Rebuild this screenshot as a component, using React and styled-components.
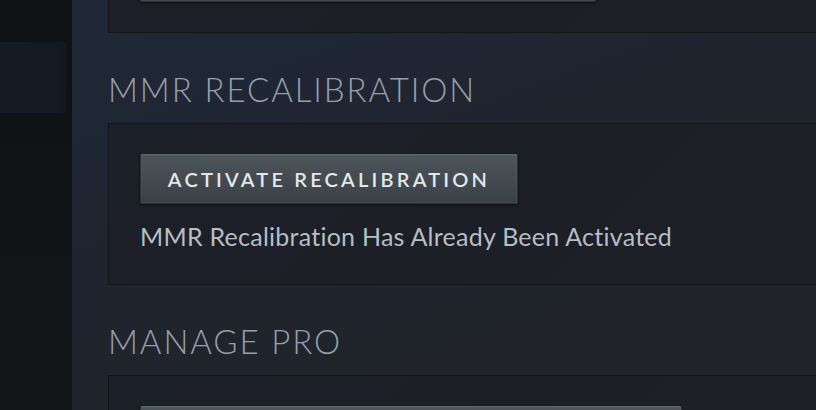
import React from "react";
import styled, { createGlobalStyle } from "styled-components";

const Global = createGlobalStyle`
  html, body { margin: 0; padding: 0; background: #101316; }
  body { width: 816px; height: 410px; overflow: hidden; font-family: "Lato", "Open Sans", sans-serif; }
  #root { width: 816px; height: 410px; }
`;

const Page = styled.div`
  display: flex;
  width: 816px;
  height: 410px;
  overflow: hidden;
`;

const Sidebar = styled.nav`
  width: 72px;
  flex: none;
  display: flex;
  flex-direction: column;
  padding-top: 42px;
  box-sizing: border-box;
  background: linear-gradient(180deg, #0f1214 0%, #101417 60%, #111518 100%);
`;

const SideItem = styled.div`
  height: 71px;
  width: ${(p) => (p.$active ? "66px" : "100%")};
  background: ${(p) =>
    p.$active ? "linear-gradient(90deg, #141b25 0%, #131a23 80%, #121820 100%)" : "transparent"};
`;

const Main = styled.main`
  flex: 1;
  min-width: 0;
  overflow: hidden;
  padding-left: 36px;
  background: linear-gradient(160deg, #202837 0%, #1f2531 35%, #202329 75%, #202328 100%);
`;

const Stack = styled.div`
  display: flex;
  flex-direction: column;
  width: 760px;
  margin-top: -79px;
`;

const Card = styled.section`
  box-sizing: border-box;
  border: 1px solid #12151a;
  background: linear-gradient(135deg, #1c2029 0%, #1c1f26 50%, #1d2026 100%);
  padding: 30px 30px ${(p) => p.$bottom || 30}px 31px;
  display: flex;
  flex-direction: column;
  align-items: flex-start;
`;

const Title = styled.h2`
  margin: 0;
  padding: 35px 0 13px;
  font-family: "Lato", sans-serif;
  font-weight: 300;
  font-size: 33px;
  line-height: 42px;
  letter-spacing: 1.9px;
  color: #96a0a9;
  text-transform: uppercase;
`;

const Button = styled.button`
  box-sizing: border-box;
  height: 50px;
  width: ${(p) => p.$width}px;
  padding: 0;
  border: 1px solid #2b3135;
  border-top-color: #5a6469;
  border-radius: 2px;
  background: linear-gradient(180deg, #4c555a 0%, #434b50 50%, #3a4146 100%);
  box-shadow: 0 1px 3px rgba(0, 0, 0, 0.55), inset 0 0 0 1px rgba(255, 255, 255, 0.04);
  font-family: "Lato", sans-serif;
  font-weight: 600;
  font-size: 20px;
  letter-spacing: 3.2px;
  color: #e2e8ea;
  text-transform: uppercase;
  display: flex;
  align-items: center;
  justify-content: center;
  cursor: pointer;
`;

const Note = styled.p`
  margin: 17px 0 0 0;
  font-family: "Lato", sans-serif;
  font-size: 25px;
  line-height: 30px;
  letter-spacing: 0.25px;
  color: #b5bec5;
`;

export default function App() {
  return (
    <>
      <Global />
      <Page>
        <Sidebar>
          <SideItem $active />
        </Sidebar>
        <Main>
          <Stack>
            <Card>
              <Button $width={456} />
            </Card>
            <Title>MMR Recalibration</Title>
            <Card $bottom={33}>
              <Button $width={378}>Activate Recalibration</Button>
              <Note>MMR Recalibration Has Already Been Activated</Note>
            </Card>
            <Title>Manage Pro</Title>
            <Card>
              <Button $width={542} />
            </Card>
          </Stack>
        </Main>
      </Page>
    </>
  );
}
